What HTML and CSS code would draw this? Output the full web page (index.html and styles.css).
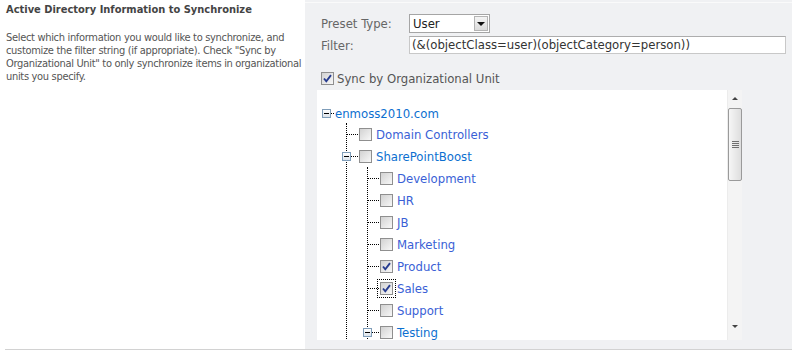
FILE: index.html
```html
<!DOCTYPE html>
<html lang="en">

<head>
    <meta charset="UTF-8">
    <title>Active Directory Synchronization</title>
    <link rel="stylesheet" href="styles.css">
</head>

<body>
    <div class="section">
        <!-- description column -->
        <div class="desc">
            <h3 class="desc-title">Active Directory Information to Synchronize</h3>
            <p class="desc-text">Select which information you would like to synchronize, and customize the filter string (if appropriate). Check "Sync by Organizational Unit" to only synchronize items in organizational units you specify.</p>
        </div>

        <!-- control column -->
        <div class="control">
            <div class="fields">
                <div class="field-label">Preset Type:</div>
                <div class="select">
                    <span class="select-value">User</span>
                    <span class="select-btn"><span class="tri-down"></span></span>
                </div>
                <div class="field-label">Filter:</div>
                <div class="text-input">(&amp;(objectClass=user)(objectCategory=person))</div>
            </div>

            <label class="sync-row">
                <span class="cb checked"></span>
                <span>Sync by Organizational Unit</span>
            </label>

            <div class="tree-panel">
                <div class="tree">
                    <div class="row root-row">
                        <span class="exp"></span><span class="dash tiny"></span>
                        <a class="node-link parent">enmoss2010.com</a>
                    </div>
                    <div class="kids lvl1">
                        <div class="row">
                            <span class="dash"></span><span class="cb"></span>
                            <a class="node-link">Domain Controllers</a>
                        </div>
                        <div class="row">
                            <span class="exp on-line"></span><span class="dash short"></span><span class="cb"></span>
                            <a class="node-link parent">SharePointBoost</a>
                        </div>
                        <div class="kids lvl2">
                            <div class="row">
                                <span class="dash"></span><span class="cb"></span>
                                <a class="node-link">Development</a>
                            </div>
                            <div class="row">
                                <span class="dash"></span><span class="cb"></span>
                                <a class="node-link">HR</a>
                            </div>
                            <div class="row">
                                <span class="dash"></span><span class="cb"></span>
                                <a class="node-link">JB</a>
                            </div>
                            <div class="row">
                                <span class="dash"></span><span class="cb"></span>
                                <a class="node-link">Marketing</a>
                            </div>
                            <div class="row">
                                <span class="dash"></span><span class="cb checked"></span>
                                <a class="node-link">Product</a>
                            </div>
                            <div class="row">
                                <span class="dash"></span><span class="cb checked focused"></span>
                                <a class="node-link">Sales</a>
                            </div>
                            <div class="row">
                                <span class="dash"></span><span class="cb"></span>
                                <a class="node-link">Support</a>
                            </div>
                            <div class="row">
                                <span class="exp on-line"></span><span class="dash short"></span><span class="cb"></span>
                                <a class="node-link parent">Testing</a>
                            </div>
                        </div>
                    </div>
                </div>

                <!-- scrollbar -->
                <div class="vscroll">
                    <span class="arrow up"></span>
                    <span class="thumb"><span class="grip"></span></span>
                    <span class="track"></span>
                    <span class="arrow down"></span>
                </div>
            </div>
        </div>
    </div>
</body>

</html>
```

FILE: styles.css
```css
/* reset */
* {
    box-sizing: border-box;
    margin: 0;
    padding: 0;
}

body {
    font-family: "DejaVu Sans Condensed", "DejaVu Sans", sans-serif;
    background-color: #fff;
    color: #4c4c4c;
    width: 792px;
    height: 352px;
    overflow: hidden;
}

.section {
    display: flex;
    height: 350px;
    margin-left: 5px;
    border-bottom: 1px solid #d2d2d2;
}

/* left description */
.desc {
    width: 300px;
    padding: 2px 0 0 1px;
}

.desc-title {
    font-size: 11px;
    font-weight: bold;
    line-height: 15px;
    color: #444;
}

.desc-text {
    margin-top: 14px;
    font-size: 11px;
    line-height: 13px;
    letter-spacing: -0.32px;
    color: #555;
}

/* right controls */
.control {
    flex: 1;
    background: linear-gradient(#f0f1f3 0 2px, #fafafa 2px 3px, #f0f1f3 3px);
    padding: 14px 6px 0 12px;
}

.fields {
    display: grid;
    grid-template-columns: 88px 1fr;
    row-gap: 3px;
    align-items: center;
    padding-left: 4px;
    font-size: 13px;
}

.field-label {
    color: #666;
}

.select {
    width: 81px;
    height: 19px;
    background-color: #fff;
    border: 1px solid #a5a5a5;
    display: flex;
    align-items: center;
    justify-content: space-between;
    padding: 0 1px 0 3px;
    color: #222;
}

.select-btn {
    width: 14px;
    height: 15px;
    border: 1px solid #b4b4b4;
    background: linear-gradient(#f4f4f4, #dcdcdc);
    display: flex;
    align-items: center;
    justify-content: center;
}

.tri-down {
    border-left: 4px solid transparent;
    border-right: 4px solid transparent;
    border-top: 4px solid #111;
}

.text-input {
    height: 18px;
    background-color: #fff;
    border: 1px solid #c8c8c8;
    border-top-color: #adadad;
    padding-left: 2px;
    line-height: 16px;
    color: #333;
}

.sync-row {
    display: flex;
    align-items: center;
    gap: 3px;
    margin-top: 18px;
    padding-left: 4px;
    height: 13px;
    font-size: 13px;
    color: #555;
}

/* checkboxes */
.cb {
    flex: none;
    width: 13px;
    height: 13px;
    border: 1px solid #8f8f8f;
    background: linear-gradient(135deg, #d2d2d2, #f8f8f8);
}

.cb.checked {
    background-image: url("data:image/svg+xml,%3Csvg xmlns='http://www.w3.org/2000/svg' width='11' height='11'%3E%3Cpath d='M2 5.5 L4.3 8.3 L9 2.2' fill='none' stroke='%23273c8f' stroke-width='1.9'/%3E%3C/svg%3E"), linear-gradient(135deg, #d2d2d2, #f8f8f8);
}

.cb.focused {
    outline: 1px dotted #000;
    outline-offset: 2px;
}

/* tree box */
.tree-panel {
    display: flex;
    width: 425px;
    height: 250px;
    margin-top: 5px;
    background-color: #fff;
    overflow: hidden;
}

.tree {
    flex: 1;
    padding: 13px 0 0 5px;
    font-size: 13px;
    overflow: hidden;
}

.row {
    display: flex;
    align-items: center;
    height: 22px;
}

.root-row {
    height: 20px;
}

.exp {
    flex: none;
    width: 9px;
    height: 9px;
    border: 1px solid #7f9db9;
    background: linear-gradient(#fff, #dce3ea);
    position: relative;
}

.exp::after {
    content: '';
    position: absolute;
    left: 1px;
    top: 3px;
    width: 5px;
    height: 1px;
    background-color: #000;
}

.exp.on-line {
    margin-left: -5px;
}

.dash {
    flex: none;
    width: 11px;
    border-top: 1px dotted #000;
    margin-right: 1px;
}

.dash.tiny {
    width: 3px;
    margin-right: 1px;
}

.dash.short {
    width: 7px;
}

.node-link {
    margin-left: 4px;
    color: #3a5fd6;
    white-space: nowrap;
}

.root-row .node-link {
    margin-left: 0;
}

.node-link.parent {
    color: #0c6fd0;
}

.kids {
    border-left: 1px dotted #000;
}

.lvl1 {
    margin-left: 24px;
}

.lvl2 {
    margin-left: 20px;
}

/* scrollbar */
.vscroll {
    flex: none;
    width: 15px;
    background-color: #f4f4f4;
    border-left: 1px solid #ececec;
    display: flex;
    flex-direction: column;
    align-items: center;
}

.arrow {
    flex: none;
    height: 17px;
    width: 7px;
    display: flex;
    align-items: center;
    justify-content: center;
}

.arrow.up::before {
    content: '';
    border-left: 3px solid transparent;
    border-right: 3px solid transparent;
    border-bottom: 3px solid #444;
}

.arrow.down {
    height: 14px;
    margin-bottom: 1px;
    align-items: flex-start;
}

.arrow.down::before {
    content: '';
    border-left: 3px solid transparent;
    border-right: 3px solid transparent;
    border-top: 3px solid #444;
}

.thumb {
    flex: none;
    width: 14px;
    height: 73px;
    margin-top: 1px;
    border: 1px solid #9a9a9a;
    border-radius: 2px;
    background: linear-gradient(90deg, #f6f6f6, #dedede);
    display: flex;
    align-items: center;
    justify-content: center;
}

.grip {
    width: 7px;
    height: 7px;
    background: repeating-linear-gradient(#707070 0 1px, transparent 1px 2px);
}

.track {
    flex: 1;
}
```
